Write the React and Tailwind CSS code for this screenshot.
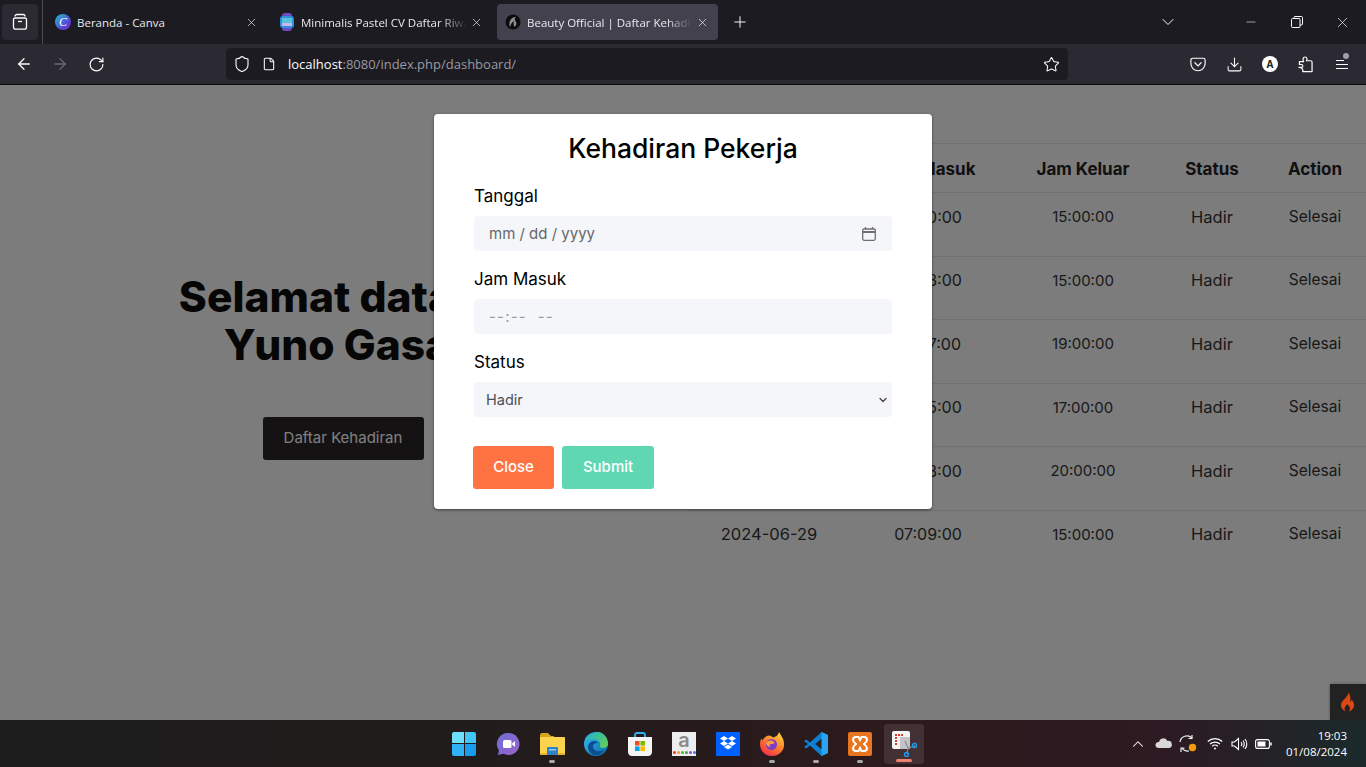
import { ArrowLeft, ArrowRight, ChevronDown, ChevronUp, Download, File, Minus, Plus, RotateCw, Shield, Star, X } from "lucide-react";

const sans = "font-['Inter',sans-serif]";
const ui = "font-['Open_Sans',sans-serif]";

const rows = [
  ["2024-06-24", "07:00:00", "15:00:00"],
  ["2024-06-25", "07:08:00", "15:00:00"],
  ["2024-06-26", "07:07:00", "19:00:00"],
  ["2024-06-27", "07:05:00", "17:00:00"],
  ["2024-06-28", "07:08:00", "20:00:00"],
  ["2024-06-29", "07:09:00", "15:00:00"],
];

const cellSizes = [
  "pt-[11.500px] text-[16.5px]",
  "pt-[11.500px] text-[16px]",
  "pt-[12px] text-[15px]",
  "pt-[11.500px] text-[16.5px]",
  "pt-[11.500px] text-[15.500px] pr-[2px]",
];

const CanvaIcon = () => (
  <div className="flex h-4 w-4 items-center justify-center rounded-full bg-[linear-gradient(135deg,#1fc4cf,#5a3fd6_70%,#7d2ae8)] font-['Liberation_Serif',serif] text-[12px] italic leading-none text-white">
    C
  </div>
);

const WatchIcon = () => (
  <svg width="16" height="18" viewBox="0 0 16 18">
    <rect x="3" y="0" width="10" height="18" rx="3" fill="#6d4bc4" />
    <rect x="1" y="3" width="14" height="12" rx="3" fill="#2f8fd8" />
    <rect x="3" y="5" width="10" height="5" fill="#58c4dc" />
    <rect x="3" y="10" width="10" height="3" fill="#c7b6ef" />
  </svg>
);

const BeautyIcon = () => (
  <svg width="16" height="16" viewBox="0 0 16 16">
    <circle cx="8" cy="8" r="7.5" fill="#0c0c0e" />
    <path d="M5 13C3 8 6 3 11 3c-2 2-1 3 0 5s0 4-2 5c0-2-1-4 0-6-2 1-3 3-4 6z" fill="#8b8b90" />
  </svg>
);

const FirefoxView = () => (
  <svg width="18" height="18" viewBox="0 0 18 18" fill="none" stroke="#fbfbfe" strokeWidth="1.3">
    <path d="M4 3.5C4 2 5 1.5 6 1.5h6c1 0 2 .5 2 2" />
    <path d="M2.500 6.500C2.500 5.500 3 5 4 5h10c1 0 1.500.5 1.500 1.500V14c0 1.500-1 2.200-2 2.200H4.500c-1 0-2-.7-2-2.200z" />
    <path d="M7 8.500h4" />
  </svg>
);

const Restore = () => (
  <svg width="12" height="12" viewBox="0 0 12 12" fill="none" stroke="#fbfbfe" strokeWidth="1">
    <rect x="0.5" y="2.5" width="8.500" height="9" rx="1" />
    <path d="M3 2.500V1.500c0-.6.400-1 1-1h6.500c.6 0 1 .4 1 1V8c0 .6-.4 1-1 1H9" />
  </svg>
);

const Pocket = () => (
  <svg width="16" height="15" viewBox="0 0 18 16" fill="none" stroke="#fbfbfe" strokeWidth="1.300">
    <path d="M1 3c0-1.200.8-2 2-2h12c1.200 0 2 .8 2 2v4c0 4.500-3.500 8-8 8s-8-3.500-8-8z" />
    <path d="M5.500 6 9 9.500 12.500 6" strokeLinecap="round" />
  </svg>
);

const Puzzle = () => (
  <svg width="15" height="17" viewBox="0 0 16 18" fill="none" stroke="#fbfbfe" strokeWidth="1.300" strokeLinejoin="round">
    <path d="M1 12h3c1.500 0 1.500-3 0-3H1.500V6H6C5 4 5 1 7.500 1S10 4 9 5h4.500c1 0 1.500.5 1.500 1.500V16.500H5c1-2.500-1-4.500-4-4.500z" />
  </svg>
);

const MenuIcon = () => (
  <div className="relative flex h-[18px] w-[18px] flex-col justify-center gap-[3px]">
    <div className="h-px w-2 bg-[#fbfbfe]" />
    <div className="h-px w-3 bg-[#fbfbfe]" />
    <div className="h-px w-3 bg-[#fbfbfe]" />
    <div className="absolute -top-[2px] right-[5px] h-[6px] w-[6px] rounded-full bg-[#a0a0a5]" />
  </div>
);

const Tab = ({ icon, title, active, fade, width }) => (
  <div className={`flex h-9 shrink-0 items-center rounded ${active ? "bg-[#42414d]" : ""} ${width}`}>
    <div className="flex w-[22px] shrink-0 justify-start">{icon}</div>
    <div
      className={`${ui} min-w-0 flex-1 overflow-hidden whitespace-nowrap pt-[1px] text-[11.500px] text-[#e8e8ec] ${fade ? "[mask-image:linear-gradient(to_right,#000_85%,transparent)]" : ""}`}
    >
      {title}
    </div>
    <X size={13} strokeWidth={1.2} className="ml-1 shrink-0 text-[#fbfbfe]" />
  </div>
);

const BrowserChrome = () => (
  <div className="shrink-0">
    <div className="flex h-[44px] items-center bg-[#1c1b22]">
      <div className="ml-[2px] flex h-9 w-9 items-center justify-center rounded bg-[#2b2a33]">
        <FirefoxView />
      </div>
      <div className="ml-1 h-[44px] w-px bg-[#4a4953]" />
      <div className="ml-[4px] flex gap-[1px]">
        <Tab icon={<CanvaIcon />} title="Beranda - Canva" width="w-[224px] pl-[8px] pr-[13px]" />
        <Tab icon={<WatchIcon />} title="Minimalis Pastel CV Daftar Riwayat Hidup" fade width="w-[224px] pl-[7px] pr-[13px]" />
        <Tab icon={<BeautyIcon />} title="Beauty Official | Daftar Kehadiran" fade active width="w-[221px] pl-[8px] pr-[9px]" />
      </div>
      <Plus size={18} strokeWidth={1.3} className="ml-[13px] text-[#fbfbfe]" />
      <ChevronDown size={20} strokeWidth={1.200} className="ml-[409px] text-[#fbfbfe]" />
      <Minus size={14} strokeWidth={1} className="ml-[66px] text-[#fbfbfe]" />
      <div className="ml-[33px]">
        <Restore />
      </div>
      <X size={17} strokeWidth={1} className="ml-[31px] text-[#fbfbfe]" />
    </div>
    <div className="flex h-[40px] items-center bg-[#2b2a33]">
      <ArrowLeft size={18} strokeWidth={1.700} className="ml-[15px] text-[#fbfbfe]" />
      <ArrowRight size={18} strokeWidth={1.700} className="ml-[18px] text-[#6b6a72]" />
      <RotateCw size={17} strokeWidth={1.700} className="ml-[19px] text-[#fbfbfe]" />
      <div className="ml-[121px] flex h-8 w-[842px] items-center rounded bg-[#1c1b22] pl-[7px]">
        <Shield size={18} strokeWidth={1.500} className="text-[#fbfbfe]" />
        <File size={14} strokeWidth={1.800} className="ml-[11px] text-[#fbfbfe]" />
        <div className={`${ui} ml-[12px] pt-[2px] text-[13px] text-[#fbfbfe]`}>
          localhost<span className="text-[#9a9aa0]">:8080/index.php/dashboard/</span>
        </div>
        <Star size={17} strokeWidth={1.500} className="ml-auto mr-[8px] text-[#fbfbfe]" />
      </div>
      <div className="ml-[122px]">
        <Pocket />
      </div>
      <Download size={17} strokeWidth={1.500} className="ml-[20px] text-[#fbfbfe]" />
      <div className={`${ui} ml-[19px] flex h-4 w-4 items-center justify-center rounded-full bg-white text-[10px] font-bold text-[#222]`}>A</div>
      <div className="ml-[20px]">
        <Puzzle />
      </div>
      <div className="ml-[23px]">
        <MenuIcon />
      </div>
    </div>
    <div className="h-px bg-[#0c0c0d]" />
  </div>
);

const TableArea = () => (
  <div className={`${sans} ml-[4px] mt-[58px] grid w-[676px] shrink-0 grid-cols-[158px_160px_150px_108px_100px] self-start text-center text-[#333]`}>
    {["Tanggal", "Jam Masuk", "Jam Keluar", "Status", "Action"].map((h, j) => (
      <div
        key={h}
        className={`flex h-[50px] items-center justify-center border-y border-[#dee2e6] pt-[3px] text-[17px] font-bold text-[#222] ${j === 4 ? "pr-[2px]" : ""}`}
      >
        {h}
      </div>
    ))}
    {rows.map((r, i) => (
      <div key={r[0]} className="contents">
        {[...r, "Hadir", "Selesai"].map((c, j) => (
          <div
            key={j}
            className={`h-[63.500px] leading-6 ${i < 5 ? "border-b border-[#dee2e6]" : ""} ${cellSizes[j]}`}
          >
            {c}
          </div>
        ))}
      </div>
    ))}
  </div>
);

const Hero = () => (
  <div className={`${sans} flex w-[686px] shrink-0 flex-col items-center pt-[188px]`}>
    <h1 className="text-center text-[42.500px] font-extrabold leading-[48px] text-[#0d0d0d]">
      Selamat datang
      <br />
      Yuno Gasai
    </h1>
    <button className="mt-[48px] flex h-[43px] w-[161px] items-center justify-center rounded-[3px] bg-[#2a2527] text-[15px] text-white">
      Daftar Kehadiran
    </button>
  </div>
);

const Field = ({ label, children }) => (
  <div className="mb-[15px]">
    <div className="mb-[9px] h-6 pt-[1px] text-[17px] leading-6 text-black">{label}</div>
    <div className="flex h-[35px] items-center rounded bg-[#f5f6fa] pt-[1px] text-[15px]">{children}</div>
  </div>
);

const Modal = () => (
  <div className={`${sans} absolute left-[434px] top-[29px] h-[395px] w-[498px] rounded bg-white px-[40px] pt-[15px] shadow-[0_1px_3px_rgba(0,0,0,0.5)]`}>
    <h2 className="mb-[16px] h-[38px] text-center text-[26.500px] font-medium leading-[38px] text-black">Kehadiran Pekerja</h2>
    <Field label="Tanggal">
      <span className="pl-[15px] text-[#666]">mm / dd / yyyy</span>
      <svg width="14" height="14" viewBox="0 0 14 14" className="ml-auto mr-[16px]" fill="none" stroke="#6f6f73" strokeWidth="1.300">
        <rect x="0.700" y="2" width="12.600" height="11.300" rx="1.500" />
        <path d="M1 5h12" strokeWidth="2" />
        <path d="M3.500 0v2M10.500 0v2" />
      </svg>
    </Field>
    <Field label="Jam Masuk">
      <span className="pl-[15px] tracking-[1.200px] text-[#9b9b9f]">--:-- &nbsp;--</span>
    </Field>
    <Field label="Status">
      <span className="pl-[12px] text-[14.500px] text-[#495057]">Hadir</span>
      <ChevronDown size={12} strokeWidth={2.500} className="ml-auto mr-[3px] text-[#444]" />
    </Field>
    <div className="mt-[29px] flex gap-[8px] text-[15px] font-medium text-white">
      <button className="-ml-px h-[43px] w-[81px] rounded-[3px] bg-[#ff7342]">Close</button>
      <button className="h-[43px] w-[92px] rounded-[3px] bg-[#5fd7b3]">Submit</button>
    </div>
  </div>
);

const PageContent = () => (
  <div className="relative flex min-h-0 flex-1 overflow-hidden bg-[#f8f9fa]">
    <Hero />
    <TableArea />
    <div className="absolute inset-0 bg-black/50" />
    <Modal />
    <div className="absolute bottom-0 right-0 flex h-9 w-9 items-center justify-center bg-[#222] shadow-[0_0_3px_rgba(0,0,0,0.3)]">
      <svg width="16" height="20" viewBox="0 0 16 20">
        <path
          d="M8 0c1 3-1 4-3 6.500C3 8.500 1 10.500 1 13c0 3 2 5.500 5 6.500-1.500-1.500-2-3-1-4.500.5-1 1.500-1.500 2-3 1.500 1 3 3 3 4.500 0 1.200-.5 2.200-1.500 3 3-.8 5.500-3 5.500-6.500 0-2.500-1.200-4-2.500-5.500 0 1-.5 2-1.500 2.200C11 7 10.500 2.500 8 0z"
          fill="#dd4814"
        />
      </svg>
    </div>
  </div>
);

const WinLogo = () => (
  <div className="grid h-6 w-6 grid-cols-2 gap-[1px]">
    <div className="rounded-tl-[2px] bg-[#6fe0fb]" />
    <div className="rounded-tr-[2px] bg-[#42c4f7]" />
    <div className="rounded-bl-[2px] bg-[#2fb2f5]" />
    <div className="rounded-br-[2px] bg-[#1a9bf0]" />
  </div>
);

const Meet = () => (
  <svg width="24" height="24" viewBox="0 0 24 24">
    <defs>
      <linearGradient id="meet" x1="0" y1="0" x2="1" y2="1">
        <stop offset="0" stopColor="#6a6fd6" />
        <stop offset="1" stopColor="#9a63c9" />
      </linearGradient>
    </defs>
    <path d="M12.500 1a11 11 0 1 1-5 20.800L1.500 23c1-1.500 1.500-3.500 1.200-5A11 11 0 0 1 12.500 1z" fill="url(#meet)" />
    <rect x="7" y="8" width="8.500" height="8" rx="1.500" fill="#fff" />
    <path d="M16 11.500 19 9v6l-3-2.500z" fill="#fff" />
  </svg>
);

const Folder = () => (
  <svg width="25" height="22" viewBox="0 0 25 22">
    <path d="M0 2c0-1 .7-2 2-2h6l3 3h3v3H0z" fill="#d9a21b" />
    <rect x="0" y="4" width="25" height="18" rx="1" fill="#fcd34d" />
    <rect x="0" y="20" width="25" height="2" fill="#e8b32c" />
    <rect x="7" y="14" width="11" height="8" rx="1" fill="#2f80c4" />
    <rect x="9" y="16" width="7" height="1.500" fill="#8bc8ee" />
  </svg>
);

const Edge = () => (
  <svg width="24" height="24" viewBox="0 0 24 24">
    <defs>
      <linearGradient id="edgeA" x1="0" y1="0" x2="1" y2="1">
        <stop offset="0" stopColor="#35c1f1" />
        <stop offset="1" stopColor="#0b64a8" />
      </linearGradient>
      <linearGradient id="edgeB" x1="0" y1="0" x2="1" y2="1">
        <stop offset="0" stopColor="#1fb6c9" />
        <stop offset="1" stopColor="#6ad24a" />
      </linearGradient>
    </defs>
    <circle cx="12" cy="12" r="12" fill="url(#edgeA)" />
    <path d="M3 8C5 2 11 0 15 0c5 1 9 6 9 12 0 2-2 4-5 4-2 0-4-1-3-3 1-3-2-6-6-6-3 0-6 0-7 1z" fill="url(#edgeB)" />
    <path d="M9 14c0 4 4 6 8 5 1 0 2-.5 3-1-2 4-6 6-10 5-3-1-6-4-6-8 0-3 3-6 6-6 2 0 4 1 4 2-3 0-5 1-5 3z" fill="#0a4f8f" />
  </svg>
);

const Store = () => (
  <svg width="24" height="24" viewBox="0 0 24 24">
    <path d="M7 6V3c0-1 .5-2 2-2h6c1.500 0 2 1 2 2v3" fill="none" stroke="#29b6f0" strokeWidth="1.800" />
    <path d="M0 5h24v15c0 2-1.500 4-4 4H4c-2.500 0-4-2-4-4z" fill="#f4f4f4" />
    <rect x="7" y="9" width="4.600" height="4.600" fill="#f25022" />
    <rect x="12.400" y="9" width="4.600" height="4.600" fill="#7fba00" />
    <rect x="7" y="14.400" width="4.600" height="4.600" fill="#00a4ef" />
    <rect x="12.400" y="14.400" width="4.600" height="4.600" fill="#ffb900" />
  </svg>
);

const AppStoreA = () => (
  <div className={`${sans} flex h-6 w-6 flex-col items-center bg-[#eeeeee]`}>
    <span className="h-[17px] text-[20px] font-semibold leading-[17px] text-[#8a8a8a]">a</span>
    <div className="mt-[2px] flex gap-[1px]">
      <div className="h-[3px] w-[3px] rounded-full bg-[#e23b3b]" />
      <div className="h-[3px] w-[3px] rounded-full bg-[#f0a020]" />
      <div className="h-[3px] w-[3px] rounded-full bg-[#4caf50]" />
      <div className="h-[3px] w-[3px] rounded-full bg-[#43a047]" />
      <div className="h-[3px] w-[3px] rounded-full bg-[#8e4ec6]" />
      <div className="h-[3px] w-[3px] rounded-full bg-[#2f80ed]" />
    </div>
  </div>
);

const Dropbox = () => (
  <div className="flex h-6 w-6 items-center justify-center bg-[#0061fe]">
    <svg width="16" height="15" viewBox="0 0 16 15" fill="#fff">
      <path d="M4 0 8 2.500 4 5 0 2.500zM12 0l4 2.500L12 5 8 2.500zM0 7.500 4 5l4 2.500L4 10zM12 5l4 2.500L12 10 8 7.500zM4 11l4-2.500 4 2.500-4 2.500z" />
    </svg>
  </div>
);

const Firefox = () => (
  <svg width="24" height="24" viewBox="0 0 24 24">
    <defs>
      <linearGradient id="ffA" x1="0.800" y1="0" x2="0.200" y2="1">
        <stop offset="0" stopColor="#ffd53d" />
        <stop offset="0.500" stopColor="#ff7a2b" />
        <stop offset="1" stopColor="#f1284e" />
      </linearGradient>
    </defs>
    <path d="M19 0c1 2 2 3 3 5 2 3 2 6 2 8 0 6-5 11-12 11S0 19 0 12c0-2 .5-4 1.500-6 0 1 .5 2 1 2.500C4 5 7 3.500 9.500 3.500 11 4 12 4.500 13 5.500c3-.5 5.500-2.500 6-5.500z" fill="url(#ffA)" />
    <circle cx="11.500" cy="12.500" r="5.500" fill="#7b3ec9" />
    <path d="M6 11c2-3 6-3 8-1 1 1 0 2-2 2-3 0-3 2-1 3-3 0-5-2-5-4z" fill="#ff9a3c" />
  </svg>
);

const VsCode = () => (
  <svg width="24" height="24" viewBox="0 0 24 24">
    <path d="M17.500 0 24 3v18l-6.500 3L6 13.500l-3.800 3L0 15l4-3-4-3 2.200-1.500 3.800 3z" fill="#0e7fd0" />
    <path d="M17.500 0 24 3v18l-6.500 3zM17.500 6.500 11 12l6.500 5.500z" fill="#2aa5f0" />
    <path d="M17.500 6.500 11 12l6.500 5.500z" fill="#23222a" />
  </svg>
);

const Xampp = () => (
  <div className="flex h-6 w-6 items-center justify-center rounded-[2px] bg-[#e8751f]">
    <svg width="18" height="18" viewBox="0 0 18 18" fill="none" stroke="#fff" strokeWidth="2">
      <path d="M5 2h2.500l1.500 3 1.500-3H13c2 0 3 1.500 3 3s-1.500 2.500-3 4c1.500 1.500 3 2.500 3 4s-1 3-3 3h-2.500L9 13l-1.500 3H5c-2 0-3-1.500-3-3s1.500-2.500 3-4C3.500 7.500 2 6.500 2 5s1-3 3-3z" />
    </svg>
  </div>
);

const Snip = () => (
  <svg width="26" height="26" viewBox="0 0 26 26">
    <rect x="1" y="0" width="18" height="18" rx="2" fill="#f4f4f4" />
    <path d="M4 3h2v2H4zM7 3h2v2H7zM10 3h2v2h-2zM4 6h2v2H4zM4 9h2v2H4zM4 12h2v2H4z" fill="#d83b28" />
    <rect x="9" y="6" width="10" height="12" fill="#c4c4c8" />
    <path d="M14 10l3 7 7-2M17 17l-1 6" stroke="#8a8a92" strokeWidth="1.200" fill="none" />
    <circle cx="23.500" cy="14.500" r="2" fill="none" stroke="#1a9bf0" strokeWidth="1.500" />
    <circle cx="15.500" cy="23.500" r="2" fill="none" stroke="#1a9bf0" strokeWidth="1.500" />
  </svg>
);

const TaskIcon = ({ children, running, active }) => (
  <div className={`relative mx-[2px] flex h-10 w-10 items-center justify-center rounded ${active ? "bg-white/10" : ""}`}>
    {children}
    {running && <div className="absolute bottom-[1px] left-[17px] h-[3px] w-[6px] rounded-full bg-[#a8a8a8]" />}
    {active && <div className="absolute bottom-[2px] left-[12px] h-[3px] w-4 rounded-full bg-[#f08070]" />}
  </div>
);

const TrayIcons = () => (
  <div className="flex items-center">
    <ChevronUp size={18} strokeWidth={1.400} className="text-white" />
    <svg width="17" height="11" viewBox="0 0 17 11" className="ml-[8px]">
      <path d="M4 4a4.500 4.500 0 0 1 8.500-1A3.500 3.500 0 0 1 14 10H3A3 3 0 0 1 4 4z" fill="#d8d8d8" />
    </svg>
    <svg width="19" height="19" viewBox="0 0 19 19" className="ml-[6px]" fill="none" stroke="#f2f2f2" strokeWidth="1.200">
      <path d="M2 8a7 7 0 0 1 12-4M16 10c0 1-.3 2-1 3M11 17a7 7 0 0 1-7-3" />
      <path d="M14 1v3.500h-3.500M3 18v-4h3.500" />
      <circle cx="14.500" cy="13.500" r="3.700" fill="#f89a0c" stroke="none" />
    </svg>
    <svg width="16" height="13" viewBox="0 0 16 13" className="ml-[10px]" fill="none" stroke="#fff" strokeWidth="1.200">
      <path d="M.8 4.500a10.500 10.500 0 0 1 14.400 0M3 7a7.500 7.500 0 0 1 10 0M5.200 9.300a4 4 0 0 1 5.600 0" />
      <circle cx="8" cy="11.500" r="1" fill="#fff" stroke="none" />
    </svg>
    <svg width="17" height="14" viewBox="0 0 17 14" className="ml-[8px]" fill="none" stroke="#fff" strokeWidth="1.100">
      <path d="M1 5h2.500L7.500 1.500v11L3.500 9H1z" />
      <path d="M10 5a3 3 0 0 1 0 4M12 3.500a6 6 0 0 1 0 7M14 2a8.500 8.500 0 0 1 0 10" />
    </svg>
    <svg width="17" height="10" viewBox="0 0 17 10" className="ml-[7px]" fill="none" stroke="#fff" strokeWidth="1.100">
      <rect x="0.600" y="0.600" width="13.800" height="8.800" rx="2" />
      <rect x="2.500" y="2.500" width="8" height="5" fill="#fff" stroke="none" />
      <path d="M16 3.500v3" strokeWidth="1.500" />
    </svg>
  </div>
);

const Taskbar = () => (
  <div className="flex h-[47px] shrink-0 items-center bg-[linear-gradient(90deg,#1d1d1d_0%,#211c1c_35%,#2d1a1d_65%,#2d1a22_85%,#1b2a2b_100%)] pl-[442px]">
    <TaskIcon><WinLogo /></TaskIcon>
    <TaskIcon><Meet /></TaskIcon>
    <TaskIcon running><Folder /></TaskIcon>
    <TaskIcon><Edge /></TaskIcon>
    <TaskIcon><Store /></TaskIcon>
    <TaskIcon><AppStoreA /></TaskIcon>
    <TaskIcon><Dropbox /></TaskIcon>
    <TaskIcon running><Firefox /></TaskIcon>
    <TaskIcon running><VsCode /></TaskIcon>
    <TaskIcon running><Xampp /></TaskIcon>
    <TaskIcon active><Snip /></TaskIcon>
    <div className="ml-[203px]">
      <TrayIcons />
    </div>
    <div className={`${ui} ml-auto mr-[19px] text-right text-[11.500px] leading-[16px] text-white`}>
      <div>19:03</div>
      <div>01/08/2024</div>
    </div>
  </div>
);

export default function App() {
  return (
    <div className="flex h-[767px] w-[1366px] flex-col overflow-hidden">
      <BrowserChrome />
      <PageContent />
      <Taskbar />
    </div>
  );
}
